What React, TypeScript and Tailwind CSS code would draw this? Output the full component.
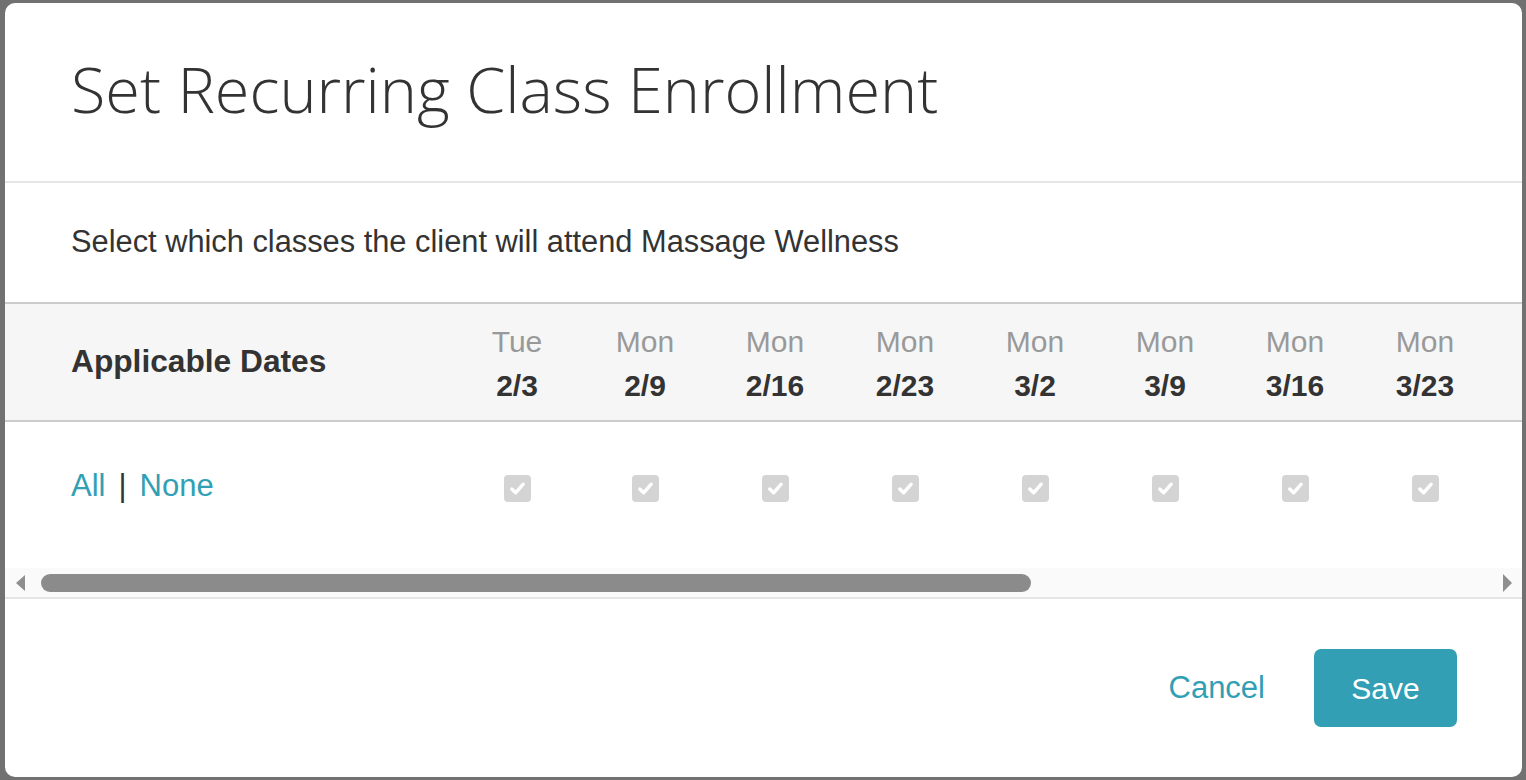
const dates = [
  { day: 'Tue', date: '2/3' },
  { day: 'Mon', date: '2/9' },
  { day: 'Mon', date: '2/16' },
  { day: 'Mon', date: '2/23' },
  { day: 'Mon', date: '3/2' },
  { day: 'Mon', date: '3/9' },
  { day: 'Mon', date: '3/16' },
  { day: 'Mon', date: '3/23' },
]

function Checkbox() {
  return (
    <span className="flex h-[27px] w-[27px] items-center justify-center rounded-[4px] bg-[#d4d4d4]">
      <svg width="19" height="19" viewBox="0 0 20 20">
        <path d="M4 10.5l4 4 8-9" fill="none" stroke="#fff" strokeWidth="3.6" strokeLinecap="round" strokeLinejoin="round" />
      </svg>
    </span>
  )
}

export default function App() {
  return (
    <div className="flex h-[780px] w-full bg-[#717171] pb-[3px] pl-[5px] pr-[4px] pt-[3px] font-['Liberation_Sans',Arial,sans-serif]">
      <div className="flex flex-1 flex-col overflow-hidden rounded-[10px] bg-white">
        {/* header */}
        <div className="flex h-[180px] shrink-0 items-center border-b-2 border-[#e5e5e5] pl-[66px]">
          <h1 className="mt-[-5px] font-['Open_Sans',sans-serif] text-[63px] font-light text-[#333]">
            Set Recurring Class Enrollment
          </h1>
        </div>

        {/* body */}
        <div className="flex h-[119px] shrink-0 items-center pl-[66px] text-[30.8px] text-[#333]">
          Select which classes the client will attend Massage Wellness
        </div>

        <div className="overflow-hidden">
          <div className="flex h-[120px] border-y-2 border-[#cccccc] bg-[#f6f6f6]">
            <div className="flex w-[449px] shrink-0 items-center pl-[66px] text-[31.7px] font-bold text-[#333]">
              Applicable Dates
            </div>
            {dates.map((d, i) => (
              <div
                key={d.date}
                className={`flex shrink-0 flex-col items-center justify-center pt-[4px] text-[30px] leading-[44px] ${i === 0 ? 'w-[126px]' : 'w-[130px]'}`}
              >
                <span className="text-[#999]">{d.day}</span>
                <span className="font-bold text-[#333]">{d.date}</span>
              </div>
            ))}
          </div>
          <div className="flex h-[146px]">
            <div className="flex w-[449px] shrink-0 items-center gap-[13px] pb-[18px] pl-[66px] text-[31px]">
              <span className="text-[#31a0b5]">All</span>
              <span className="text-[#333]">|</span>
              <span className="text-[#31a0b5]">None</span>
            </div>
            {dates.map((d, i) => (
              <div
                key={d.date}
                className={`flex shrink-0 items-center justify-center pb-[14px] ${i === 0 ? 'w-[126px]' : 'w-[130px]'}`}
              >
                <Checkbox />
              </div>
            ))}
          </div>
        </div>

        {/* scrollbar */}
        <div className="flex h-[31px] shrink-0 items-center border-b-2 border-[#e5e5e5] bg-[#fafafa]">
          <svg width="36" height="18" viewBox="0 0 36 18" className="shrink-0">
            <polygon points="20,1 11,9 20,17" fill="#8e8e8e" />
          </svg>
          <div className="h-[18px] w-[990px] rounded-full bg-[#8b8b8b]" />
          <div className="flex-1" />
          <svg width="22" height="18" viewBox="0 0 22 18" className="shrink-0">
            <polygon points="3,0 12,9 3,18" fill="#8e8e8e" />
          </svg>
        </div>

        {/* footer */}
        <div className="flex flex-1 items-center justify-end gap-[49px] pr-[65px]">
          <button className="text-[31px] text-[#31a0b5]">Cancel</button>
          <button className="h-[78px] w-[143px] rounded-[7px] bg-[#329fb5] text-[30px] text-white">
            Save
          </button>
        </div>
      </div>
    </div>
  )
}
